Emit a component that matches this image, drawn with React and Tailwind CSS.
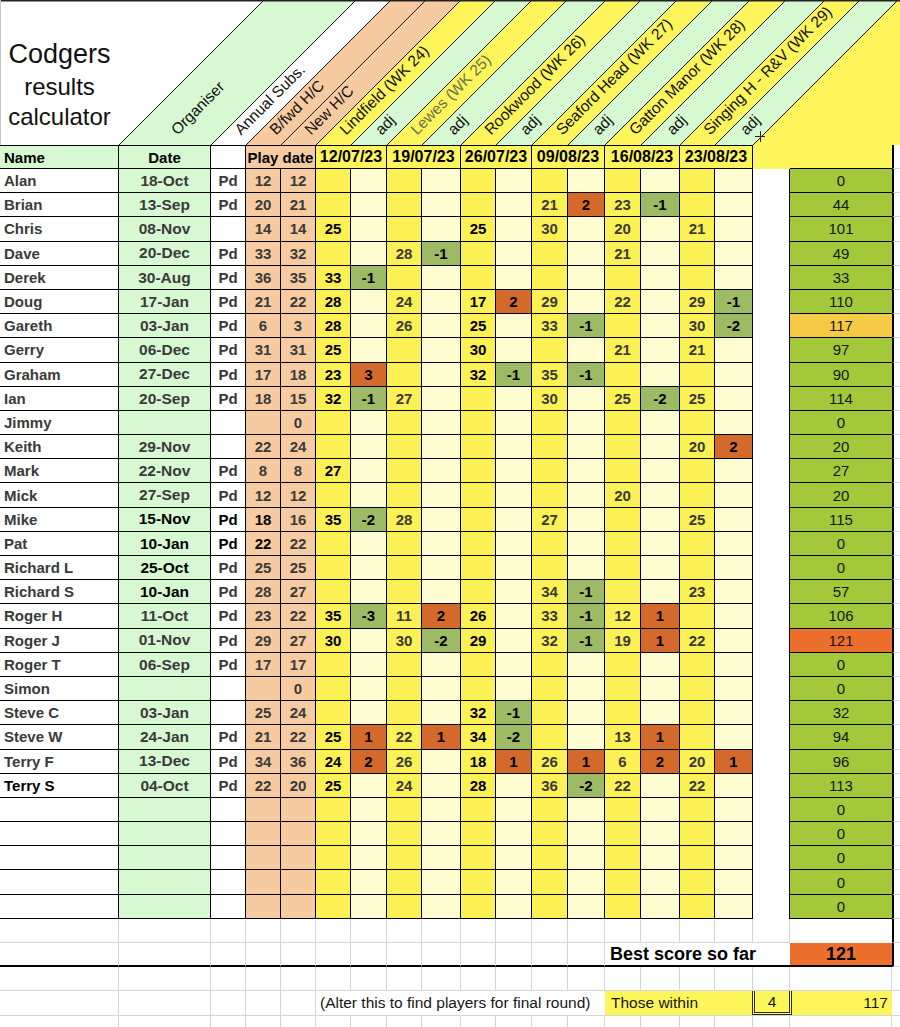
import React from 'react'

// column layout shared by every row of the sheet
const GRID = 'grid grid-cols-[119px_92px_35px_35px_35px_35px_36px_35px_39px_35px_36px_36px_37px_36px_39px_35px_38px_37px_102px_8px]'
const CELL = 'flex items-center overflow-hidden whitespace-nowrap border-r border-b border-r-black border-b-black'
const GRAY = 'border-r border-b border-r-[#d4d4d4] border-b-[#d4d4d4] bg-white'
const DIM = 'text-[#3a3a3a]'

const HDR_YELLOW = '#fdf55b'
const _ = null

const players = [
  { n: 'Alan', d: '18-Oct', pd: 'Pd', b: 12, h: 12, s: [_, _, _, _, _, _, _, _, _, _, _, _], t: 0 },
  { n: 'Brian', d: '13-Sep', pd: 'Pd', b: 20, h: 21, s: [_, _, _, _, _, _, 21, 2, 23, -1, _, _], t: 44 },
  { n: 'Chris', d: '08-Nov', pd: '', b: 14, h: 14, s: [25, _, _, _, 25, _, 30, _, 20, _, 21, _], t: 101 },
  { n: 'Dave', d: '20-Dec', pd: 'Pd', b: 33, h: 32, s: [_, _, 28, -1, _, _, _, _, 21, _, _, _], t: 49 },
  { n: 'Derek', d: '30-Aug', pd: 'Pd', b: 36, h: 35, s: [33, -1, _, _, _, _, _, _, _, _, _, _], t: 33 },
  { n: 'Doug', d: '17-Jan', pd: 'Pd', b: 21, h: 22, s: [28, _, 24, _, 17, 2, 29, _, 22, _, 29, -1], t: 110 },
  { n: 'Gareth', d: '03-Jan', pd: 'Pd', b: 6, h: 3, s: [28, _, 26, _, 25, _, 33, -1, _, _, 30, -2], t: 117, tc: 'gold' },
  { n: 'Gerry', d: '06-Dec', pd: 'Pd', b: 31, h: 31, s: [25, _, _, _, 30, _, _, _, 21, _, 21, _], t: 97 },
  { n: 'Graham', d: '27-Dec', pd: 'Pd', b: 17, h: 18, s: [23, 3, _, _, 32, -1, 35, -1, _, _, _, _], t: 90 },
  { n: 'Ian', d: '20-Sep', pd: 'Pd', b: 18, h: 15, s: [32, -1, 27, _, _, _, 30, _, 25, -2, 25, _], t: 114 },
  { n: 'Jimmy', d: '', pd: '', b: '', h: 0, s: [_, _, _, _, _, _, _, _, _, _, _, _], t: 0 },
  { n: 'Keith', d: '29-Nov', pd: '', b: 22, h: 24, s: [_, _, _, _, _, _, _, _, _, _, 20, 2], t: 20 },
  { n: 'Mark', d: '22-Nov', pd: 'Pd', b: 8, h: 8, s: [27, _, _, _, _, _, _, _, _, _, _, _], t: 27 },
  { n: 'Mick', d: '27-Sep', pd: 'Pd', b: 12, h: 12, s: [_, _, _, _, _, _, _, _, 20, _, _, _], t: 20 },
  { n: 'Mike', d: '15-Nov', pd: 'Pd', b: 18, h: 16, s: [35, -2, 28, _, _, _, 27, _, _, _, 25, _], t: 115, dk: true, pk: true, bk: true },
  { n: 'Pat', d: '10-Jan', pd: 'Pd', b: 22, h: 22, s: [_, _, _, _, _, _, _, _, _, _, _, _], t: 0, dk: true, pk: true, bk: true },
  { n: 'Richard L', d: '25-Oct', pd: 'Pd', b: 25, h: 25, s: [_, _, _, _, _, _, _, _, _, _, _, _], t: 0, dk: true },
  { n: 'Richard S', d: '10-Jan', pd: 'Pd', b: 28, h: 27, s: [_, _, _, _, _, _, 34, -1, _, _, 23, _], t: 57, dk: true },
  { n: 'Roger H', d: '11-Oct', pd: 'Pd', b: 23, h: 22, s: [35, -3, 11, 2, 26, _, 33, -1, 12, 1, _, _], t: 106 },
  { n: 'Roger J', d: '01-Nov', pd: 'Pd', b: 29, h: 27, s: [30, _, 30, -2, 29, _, 32, -1, 19, 1, 22, _], t: 121, tc: 'orange' },
  { n: 'Roger T', d: '06-Sep', pd: 'Pd', b: 17, h: 17, s: [_, _, _, _, _, _, _, _, _, _, _, _], t: 0 },
  { n: 'Simon', d: '', pd: '', b: '', h: 0, s: [_, _, _, _, _, _, _, _, _, _, _, _], t: 0 },
  { n: 'Steve C', d: '03-Jan', pd: '', b: 25, h: 24, s: [_, _, _, _, 32, -1, _, _, _, _, _, _], t: 32 },
  { n: 'Steve W', d: '24-Jan', pd: 'Pd', b: 21, h: 22, s: [25, 1, 22, 1, 34, -2, _, _, 13, 1, _, _], t: 94 },
  { n: 'Terry F', d: '13-Dec', pd: 'Pd', b: 34, h: 36, s: [24, 2, 26, _, 18, 1, 26, 1, 6, 2, 20, 1], t: 96 },
  { n: 'Terry S', d: '04-Oct', pd: 'Pd', b: 22, h: 20, s: [25, _, 24, _, 28, _, 36, -2, 22, _, 22, _], t: 113, nk: true },
]

const blanks = [1, 2, 3, 4, 5].map((i) => ({
  key: 'blank' + i, n: '', d: '', pd: '', b: '', h: '', s: Array(12).fill(_), t: 0,
}))

const dates = ['12/07/23', '19/07/23', '26/07/23', '09/08/23', '16/08/23', '23/08/23']

const bands = [
  { x0: 119, x1: 211, fill: '#d7f9d1', label: 'Organiser' },
  { x0: 211, x1: 246, fill: '#ffffff', label: 'Annual Subs.' },
  { x0: 246, x1: 281, fill: '#f7cba1', label: 'B/fwd H/C' },
  { x0: 281, x1: 316, fill: '#f7cba1', label: 'New H/C' },
  { x0: 316, x1: 351, fill: HDR_YELLOW, label: 'Lindfield (WK 24)' },
  { x0: 351, x1: 387, fill: '#d7f9d1', label: 'adj' },
  { x0: 387, x1: 422, fill: HDR_YELLOW, label: 'Lewes (WK 25)', color: '#6e6e4c' },
  { x0: 422, x1: 461, fill: '#d7f9d1', label: 'adj' },
  { x0: 461, x1: 496, fill: HDR_YELLOW, label: 'Rookwood (WK 26)' },
  { x0: 496, x1: 532, fill: '#d7f9d1', label: 'adj' },
  { x0: 532, x1: 568, fill: HDR_YELLOW, label: 'Seaford Head (WK 27)' },
  { x0: 568, x1: 605, fill: '#d7f9d1', label: 'adj' },
  { x0: 605, x1: 641, fill: HDR_YELLOW, label: 'Gatton Manor (WK 28)' },
  { x0: 641, x1: 680, fill: '#d7f9d1', label: 'adj' },
  { x0: 680, x1: 715, fill: HDR_YELLOW, label: 'Singing H - R&V (WK 29)' },
  { x0: 715, x1: 753, fill: '#d7f9d1', label: 'adj' },
]

function SlantHeader() {
  return (
    <div className="relative h-[145px]">
      <svg className="absolute inset-0" width="900" height="145" viewBox="0 0 900 145">
        <rect width="900" height="145" fill="#ffffff" />
        {bands.map((b) => (
          <polygon key={'p' + b.x0} points={`${b.x0},145 ${b.x1},145 ${b.x1 + 145},0 ${b.x0 + 145},0`} fill={b.fill} />
        ))}
        <polygon points="753,145 898,0 900,0 900,145" fill={HDR_YELLOW} />
        {bands.map((b) => (
          <line key={'l' + b.x0} x1={b.x0} y1="145" x2={b.x0 + 145} y2="0" stroke="#161616" strokeWidth="1" />
        ))}
        <line x1="753" y1="145" x2="898" y2="0" stroke="#161616" strokeWidth="1" />
        {bands.map((b) => {
          const cx = (b.x0 + b.x1) / 2
          return (
            <text
              key={'t' + b.x0}
              transform={`translate(${cx + 12.4} 135.8) rotate(-45)`}
              fontSize="15.5"
              fontFamily="'Liberation Sans', Arial, sans-serif"
              fill={b.color || '#111111'}
            >
              {b.label}
            </text>
          )
        })}
        <line x1="755" y1="136.5" x2="765" y2="136.5" stroke="#222" strokeWidth="1" />
        <line x1="760.5" y1="131" x2="760.5" y2="142" stroke="#222" strokeWidth="1" />
        <line x1="0" y1="0.75" x2="900" y2="0.75" stroke="#222" strokeWidth="1.5" />
        <line x1="0.5" y1="0" x2="0.5" y2="145" stroke="#c4c4c4" strokeWidth="1" />
      </svg>
      <div className="relative w-[119px] pt-[39px] text-center font-normal text-[#111]">
        <div className="text-[27px] leading-[30px]">Codgers</div>
        <div className="mt-[3px] text-[24px] leading-[30px]">results</div>
        <div className="text-[24px] leading-[30px]">calculator</div>
      </div>
    </div>
  )
}

function TitleRow() {
  return (
    <div className={`${GRID} h-[24px] text-[15px] font-bold leading-none text-black`}>
      <div className={`${CELL} border-t border-t-black bg-[#d7f9d1] pl-[4px]`}>Name</div>
      <div className={`${CELL} border-t border-t-black bg-[#d7f9d1] justify-center`}>Date</div>
      <div className={`${CELL} border-t border-t-black bg-white`} />
      <div className={`${CELL} col-span-2 border-t border-t-black bg-[#f7cba1] justify-center`}>Play date</div>
      {dates.map((d) => (
        <div key={d} className={`${CELL} col-span-2 border-t border-t-black bg-[#fdf55b] justify-center text-[16px]`}>
          {d}
        </div>
      ))}
      <div className="bg-[#fdf55b]" />
      <div className="bg-[#fdf55b] border-b border-b-black" />
      <div className="border-l-2 border-l-black border-b border-b-[#d4d4d4]" />
    </div>
  )
}

function PlayerRow({ p }) {
  let total = 'bg-[#a3c93b]'
  if (p.tc === 'gold') total = 'bg-[#f6c945]'
  if (p.tc === 'orange') total = 'bg-[#ec6f2e]'
  return (
    <div className={`${GRID} h-[24.2px] text-[15px] font-bold leading-none`}>
      <div className={`${CELL} bg-white pl-[4px] ${p.nk ? 'text-black' : DIM}`}>{p.n}</div>
      <div className={`${CELL} bg-[#d7f9d1] justify-center text-[15.5px] ${p.dk ? 'text-black' : DIM}`}>{p.d}</div>
      <div className={`${CELL} bg-white justify-center ${p.pk ? 'text-black' : DIM}`}>{p.pd}</div>
      <div className={`${CELL} bg-[#f7cba1] justify-center ${p.bk ? 'text-black' : DIM}`}>{p.b}</div>
      <div className={`${CELL} bg-[#f7cba1] justify-center ${DIM}`}>{p.h}</div>
      {p.s.map((v, i) => {
        const adj = i % 2 === 1
        let bg = adj ? 'bg-[#fefdd2]' : 'bg-[#fcf154]'
        if (adj && v !== null) bg = v < 0 ? 'bg-[#9dbb65]' : 'bg-[#d36a2c]'
        const ink = adj || i === 0 || i === 4 ? 'text-black' : DIM
        return (
          <div key={i} className={`${CELL} justify-center ${bg} ${ink}`}>
            {v}
          </div>
        )
      })}
      <div className="bg-white border-r border-r-black" />
      <div className={`flex items-center justify-center border-b border-b-black font-normal text-[#161616] ${total}`}>{p.t}</div>
      <div className="border-l-2 border-l-black border-b border-b-[#d4d4d4]" />
    </div>
  )
}

function GrayRow({ frame }) {
  return (
    <div className={`${GRID} h-[24.2px]`}>
      {Array.from({ length: 18 }).map((_, i) => (
        <div key={i} className={GRAY} />
      ))}
      {frame ? <div className="bg-white" /> : <div className={GRAY} />}
      {frame ? (
        <div className="border-l-2 border-l-black border-b border-b-[#d4d4d4]" />
      ) : (
        <div className="border-b border-b-[#d4d4d4]" />
      )}
    </div>
  )
}

function BestRow() {
  return (
    <div className={`${GRID} h-[24.2px] font-bold text-black leading-none`}>
      {Array.from({ length: 13 }).map((_, i) => (
        <div key={i} className="bg-white border-r border-r-[#d4d4d4] border-b-2 border-b-black" />
      ))}
      <div className="col-span-5 flex items-center bg-white pl-[5px] text-[18px] border-b-2 border-b-black whitespace-nowrap">
        Best score so far
      </div>
      <div className="flex items-center justify-center bg-[#ec6f2e] text-[18px] border-b-2 border-b-black">121</div>
      <div className="border-l-2 border-l-black border-b border-b-[#d4d4d4]" />
    </div>
  )
}

function WithinRow() {
  return (
    <div className={`${GRID} h-[24.2px] text-[15.5px] font-normal text-[#161616] leading-none`}>
      {Array.from({ length: 5 }).map((_, i) => (
        <div key={i} className={GRAY} />
      ))}
      <div className="col-span-8 flex items-center bg-white pl-[4px] whitespace-nowrap border-b border-b-[#d4d4d4]">
        (Alter this to find players for final round)
      </div>
      <div className="col-span-6 grid grid-cols-[147px_40px_1fr] bg-[#fcf65a] border-b border-b-[#d4d4d4]">
        <div className="flex items-center pl-[6px] whitespace-nowrap">Those within</div>
        <div className="flex items-center justify-center border-x-[3px] border-b-[3px] border-double border-[#2a2a2a]">4</div>
        <div className="flex items-center justify-end pr-[4px]">117</div>
      </div>
      <div className="border-b border-b-[#d4d4d4]" />
    </div>
  )
}

export default function App() {
  return (
    <div className="w-[900px] h-[1027px] overflow-hidden bg-white font-['Liberation_Sans',Arial,sans-serif]">
      <SlantHeader />
      <TitleRow />
      {players.map((p) => (
        <PlayerRow key={p.n} p={p} />
      ))}
      {blanks.map((p) => (
        <PlayerRow key={p.key} p={p} />
      ))}
      <GrayRow frame />
      <BestRow />
      <GrayRow />
      <WithinRow />
      <GrayRow />
    </div>
  )
}
